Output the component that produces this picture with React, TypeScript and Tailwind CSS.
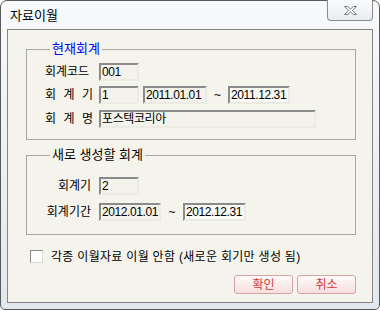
import React from "react";

const FONT = { fontFamily: '"Liberation Sans", "Noto Sans CJK KR", sans-serif' };

function Field({ value, w, light }: { value: string; w: string; light?: boolean }) {
  return (
    <div
      className={`h-[18px] ${w} border-2 border-t-[#8a8a8a] border-l-[#8a8a8a] border-r-[#ebebe4] border-b-[#ebebe4] ${
        light ? "bg-[#f8f8f4]" : "bg-[#f3f3ec]"
      } flex items-center pl-[1px] text-[12px] leading-none tracking-[-0.4px] text-black overflow-hidden whitespace-nowrap`}
    >
      {value}
    </div>
  );
}

function Spaced({ text }: { text: string }) {
  return (
    <div className="w-[48px] flex justify-between text-[12px] leading-none">
      {text.split("").map((c, i) => (
        <span key={i}>{c}</span>
      ))}
    </div>
  );
}

function PinkButton({ label }: { label: string }) {
  return (
    <button className="h-[19px] w-[59px] rounded-[3px] border border-[#d9a3a3] bg-gradient-to-b from-[#fffafa] to-[#f6dede] text-[12px] leading-none text-[#d23c3c]">
      {label}
    </button>
  );
}

export default function App() {
  return (
    <div className="w-[380px] h-[310px] bg-white" style={FONT}>
      <div className="w-[380px] h-[310px] flex flex-col rounded-t-[7px] rounded-b-[5px] border border-[#5a5a5a] bg-gradient-to-b from-[#f7f9fb] to-[#e3e8ee] px-[6px] pb-[6px]">
        {/* Title bar */}
        <div className="h-[28px] flex items-start justify-between">
          <span className="mt-[7px] ml-[3px] text-[13px] leading-[16px] text-black">자료이월</span>
          <div className="w-[46px] h-[21px] -mt-[1px] rounded-b-[4px] border border-t-0 border-[#8c8c8c] bg-gradient-to-b from-[#fafbfc] to-[#e8ecf0] flex items-center justify-center">
            <svg width="15" height="11" viewBox="0 0 15 11">
              <path
                d="M1.5 1.5h3.2l2.8 2.6 2.8-2.6h3.2l-4.3 4 4.3 4h-3.2l-2.8-2.6-2.8 2.6h-3.2l4.3-4z"
                fill="#fff"
                stroke="#7a7a7a"
                strokeWidth="1"
                strokeLinejoin="round"
              />
            </svg>
          </div>
        </div>

        {/* Client area */}
        <div className="flex-1 border border-[#858585] bg-[#f4f4ec] pl-[18px] pt-[11px] flex flex-col">
          <fieldset className="w-[330px] border border-[#a8a8a2] pl-[18px] pb-[11px]">
            <legend className="ml-[5px] px-[2px] text-[13px] leading-[16px] text-[#0000ff]">현재회계</legend>
            <div className="mt-[6px] flex items-center">
              <div className="w-[48px] text-[12px] leading-none flex justify-between">
                <span>회계코드</span>
              </div>
              <div className="ml-[6px]">
                <Field value="001" w="w-[40px]" />
              </div>
            </div>
            <div className="mt-[5px] flex items-center">
              <Spaced text="회계기" />
              <div className="ml-[6px] flex items-center">
                <Field value="1" w="w-[40px]" />
                <div className="ml-[4px]">
                  <Field value="2011.01.01" w="w-[64px]" />
                </div>
                <span className="w-[21px] text-center text-[12px] leading-none">~</span>
                <Field value="2011.12.31" w="w-[62px]" light />
              </div>
            </div>
            <div className="mt-[6px] flex items-center">
              <Spaced text="회계명" />
              <div className="ml-[6px]">
                <Field value="포스텍코리아" w="w-[217px]" />
              </div>
            </div>
          </fieldset>

          <fieldset className="mt-[7px] w-[330px] border border-[#a8a8a2] pl-[18px] pb-[13px]">
            <legend className="ml-[5px] px-[2px] text-[13px] leading-[16px] text-black">새로 생성할 회계</legend>
            <div className="mt-[14px] flex items-center">
              <div className="w-[46px] text-right text-[12px] leading-none">회계기</div>
              <div className="ml-[8px]">
                <Field value="2" w="w-[40px]" />
              </div>
            </div>
            <div className="mt-[8px] flex items-center">
              <div className="w-[46px] text-right text-[12px] leading-none">회계기간</div>
              <div className="ml-[8px] flex items-center">
                <Field value="2012.01.01" w="w-[62px]" />
                <span className="w-[22px] text-center text-[12px] leading-none">~</span>
                <Field value="2012.12.31" w="w-[63px]" light />
              </div>
            </div>
          </fieldset>

          <div className="mt-[15px] ml-[4px] flex items-center">
            <div className="w-[13px] h-[13px] border border-t-[#8a8a8a] border-l-[#8a8a8a] border-r-[#d8d8d8] border-b-[#d8d8d8] bg-white" />
            <span className="ml-[8px] text-[12px] leading-none tracking-[0.3px] text-black">
              각종 이월자료 이월 안함 (새로운 회기만 생성 됨)
            </span>
          </div>

          <div className="mt-[12px] w-[330px] flex justify-end gap-[4px]">
            <PinkButton label="확인" />
            <PinkButton label="취소" />
          </div>
        </div>
      </div>
    </div>
  );
}
